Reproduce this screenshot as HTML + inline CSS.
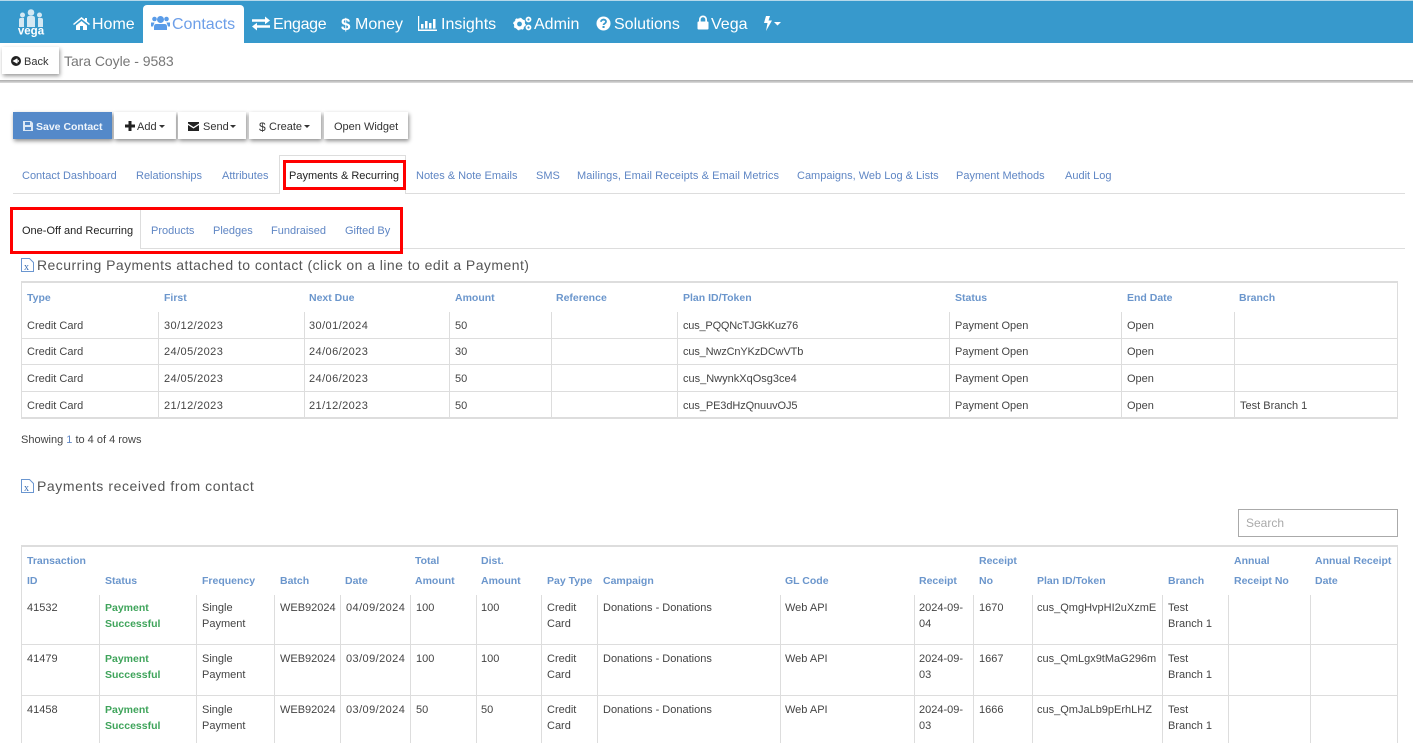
<!DOCTYPE html>
<html><head><meta charset="utf-8"><style>
html,body{margin:0;padding:0;background:#fff}
#p{position:relative;width:1413px;height:743px;overflow:hidden;background:#fff;font-family:"Liberation Sans",sans-serif;font-size:11px;color:#444}
#p span{position:absolute;white-space:nowrap;line-height:14px;height:14px;margin-top:1px}
#p div,#p svg{position:absolute}
#p span.z{margin-top:0}
.n{color:#fff;font-size:16px;top:17px}
.b{color:#333;font-size:11px;top:119px}
.l{color:#5f86c4;top:168px}
.s{color:#5f86c4;top:223px}
#p .h{color:#6b96cc;font-weight:bold;font-size:10.5px}
.g{background:#ddd}
.btn{background:#fff;box-shadow:1px 2px 4px rgba(0,0,0,.45);top:112px;height:27px}
#p .r{color:#3fa45b;font-weight:bold;font-size:10.5px}
.d{letter-spacing:.42px}
</style></head><body><div id="p">
<div style="left:0;top:0;width:1413px;height:43px;background:#3799cc;border-top:1px solid #b5d8ea;box-sizing:border-box"></div>
<div style="left:143px;top:5px;width:101px;height:38px;background:#fff;border-radius:4px 4px 0 0"></div>
<svg style="left:16px;top:8px" width="30" height="30" viewBox="0 0 30 30" fill="#d4e8f3"><circle cx="15" cy="4.500" r="3.300"/><circle cx="6.500" cy="7" r="2.500"/><circle cx="23.500" cy="7" r="2.500"/><path d="M11 10.500q0-2.500 2-2.500h4q2 0 2 2.500V19h-8zM3 12q0-2 1.500-2h3.500v9H3zM22 10h3.500Q27 10 27 12v7h-5z"/><text x="15" y="26.500" text-anchor="middle" font-family="Liberation Sans" font-size="11.500" font-weight="bold" fill="#fff">vega</text></svg>
<svg style="left:73px;top:16px" width="17" height="15" viewBox="0 0 17 15" fill="#fff"><path d="M8.500 1 0 8l1 1 7.500-6 7.500 6 1-1-3-2.500V2h-2v1.800zM3 9.500V14h4v-4h3v4h4V9.500L8.500 5z"/></svg>
<span class="n" style="left:92px">Home</span>
<svg style="left:151px;top:15px" width="19" height="16" viewBox="0 0 19 16" fill="#5a9ce8"><circle cx="9.500" cy="4.500" r="3.500"/><circle cx="3.500" cy="4" r="2.300"/><circle cx="15.500" cy="4" r="2.300"/><path d="M5 9h9q2 0 2 3v3H3v-3q0-3 2-3zM0 7.500h3.500L2 11.500H0zM15.500 7.500H19v4h-2z"/></svg>
<span class="n" style="left:172px;color:#6d9fe8">Contacts</span>
<svg style="left:252px;top:16px" width="18" height="15" viewBox="0 0 18 15" fill="#fff"><path d="M0 3.200h13V.5l5 4L13 8.300V5.800H0zM18 9.200H5V6.700L0 10.500l5 4v-2.700h13z"/></svg>
<span class="n" style="left:273px;letter-spacing:-.3px">Engage</span>
<span class="n" style="left:341px;font-weight:bold;font-size:17px">$</span>
<span class="n" style="left:355px">Money</span>
<svg style="left:418px;top:16px" width="19" height="15" viewBox="0 0 19 15" fill="#fff"><path d="M0 0h1.200v13.500H19V15H0zM3 8h2.500v4.500H3zM7 5h2.500v7.500H7zM11 7h2.500v5.500H11zM15 3h2.500v9.500H15z"/></svg>
<span class="n" style="left:441px">Insights</span>
<svg style="left:513px;top:16px" width="19" height="15" viewBox="0 0 19 15" fill="#fff"><circle cx="6.500" cy="8" r="4" fill="none" stroke="#fff" stroke-width="3.200"/><circle cx="6.500" cy="8" r="5.500" fill="none" stroke="#fff" stroke-width="1.600" stroke-dasharray="2 2.300"/><circle cx="15.500" cy="3.500" r="2" fill="none" stroke="#fff" stroke-width="1.800"/><circle cx="15.500" cy="11.500" r="2" fill="none" stroke="#fff" stroke-width="1.800"/></svg>
<span class="n" style="left:534px">Admin</span>
<svg style="left:596px;top:16px" width="15" height="15" viewBox="0 0 15 15"><circle cx="7.500" cy="7.500" r="7" fill="#fff"/><path d="M5 5.800c.2-3 5-3 5 0 0 1.700-2.400 1.700-2.400 3.200" fill="none" stroke="#3799cc" stroke-width="1.800"/><rect x="6.500" y="10" width="2.100" height="2" fill="#3799cc"/></svg>
<span class="n" style="left:614px">Solutions</span>
<svg style="left:697px;top:15px" width="12" height="15" viewBox="0 0 12 15" fill="#fff"><path d="M2 6.500V4.500a4 4 0 0 1 8 0v2H8.300v-2a2.300 2.300 0 0 0-4.600 0v2z"/><rect x="0.500" y="6.500" width="11" height="8" rx="1"/></svg>
<span class="n" style="left:711px">Vega</span>
<svg style="left:763px;top:16px" width="18" height="15" viewBox="0 0 18 15" fill="#fff"><path d="M3 0h4L5.500 4.500H9L3 15l1.500-8H1zM11 6h7l-3.500 3.500z"/></svg>

<div style="left:0;top:80px;width:1413px;height:3px;background:linear-gradient(#aaa,#ddd)"></div>
<div style="left:2px;top:47px;width:57px;height:27px;background:#fff;box-shadow:1px 2px 4px rgba(0,0,0,.4)"></div>
<svg style="left:11px;top:56px" width="10" height="10" viewBox="0 0 10 10"><circle cx="5" cy="5" r="5" fill="#222"/><path d="M6.500 3 3 5l3.500 2M3.500 5H8" stroke="#fff" stroke-width="1.500" fill="none"/></svg>
<span class="b" style="left:24px;top:54px;color:#333">Back</span>
<span class="z" style="left:64px;top:54px;font-size:14px;color:#777;letter-spacing:-.05px">Tara Coyle - 9583</span>

<div class="btn" style="left:13px;width:99px;background:#5489c9"></div>
<svg style="left:23px;top:121px" width="10" height="10" viewBox="0 0 10 10"><path fill="#dce8f5" d="M0 0h8l2 2v8H0zM2 1v3h5V1zM2 6v3h6V6z"/></svg>
<span class="b" style="left:36px;color:#eef4fb;font-weight:bold;font-size:10.5px">Save Contact</span>
<div class="btn" style="left:114px;width:62px"></div>
<svg style="left:125px;top:121px" width="10" height="10" viewBox="0 0 10 10"><path fill="#222" d="M3.500 0h3v3.500H10v3H6.500V10h-3V6.500H0v-3h3.500z"/></svg>
<span class="b" style="left:137px">Add</span>
<svg style="left:159px;top:125px" width="6" height="3"><path fill="#333" d="M0 0h6L3 3z"/></svg>
<div class="btn" style="left:178px;width:68px"></div>
<svg style="left:188px;top:122px" width="11" height="9" viewBox="0 0 11 9"><path fill="#222" d="M0 0h11v1.500L5.500 5 0 1.500zM0 3l5.500 3.500L11 3v6H0z"/></svg>
<span class="b" style="left:203px">Send</span>
<svg style="left:230px;top:125px" width="6" height="3"><path fill="#333" d="M0 0h6L3 3z"/></svg>
<div class="btn" style="left:249px;width:72px"></div>
<span class="b" style="left:259px;font-size:12px">$</span>
<span class="b" style="left:269px">Create</span>
<svg style="left:304px;top:125px" width="6" height="3"><path fill="#333" d="M0 0h6L3 3z"/></svg>
<div class="btn" style="left:324px;width:84px"></div>
<span class="b" style="left:334px">Open Widget</span>

<div class="g" style="left:13px;top:193px;width:1392px;height:1px"></div>
<div style="left:279px;top:155px;width:127px;height:39px;background:#fff;border:1px solid #ddd;border-bottom:0;box-sizing:border-box"></div>
<span class="l" style="left:22px">Contact Dashboard</span>
<span class="l" style="left:136px">Relationships</span>
<span class="l" style="left:222px">Attributes</span>
<span style="left:289px;top:168px;color:#222">Payments &amp; Recurring</span>
<span class="l" style="left:416px">Notes &amp; Note Emails</span>
<span class="l" style="left:536px">SMS</span>
<span class="l" style="left:577px;letter-spacing:.07px">Mailings, Email Receipts &amp; Email Metrics</span>
<span class="l" style="left:797px">Campaigns, Web Log &amp; Lists</span>
<span class="l" style="left:956px">Payment Methods</span>
<span class="l" style="left:1065px">Audit Log</span>
<div style="left:283px;top:160px;width:123px;height:30px;border:3px solid #f00;box-sizing:border-box"></div>

<div class="g" style="left:140px;top:248px;width:1265px;height:1px"></div>
<div class="g" style="left:140px;top:210px;width:1px;height:39px"></div>
<span style="left:22px;top:223px;color:#222">One-Off and Recurring</span>
<span class="s" style="left:151px">Products</span>
<span class="s" style="left:213px">Pledges</span>
<span class="s" style="left:271px">Fundraised</span>
<span class="s" style="left:345px">Gifted By</span>
<div style="left:10px;top:207px;width:393px;height:47px;border:3px solid #f00;box-sizing:border-box"></div>

<svg style="left:21px;top:258px" width="13" height="14" viewBox="0 0 13 14"><path d="M.5.500h8l4 4v9H.500z" fill="#fff" stroke="#6a96d0"/><text x="3" y="12" font-size="10" font-family="Liberation Serif" fill="#3a6fb5">x</text></svg>
<span class="z" style="left:37px;top:258px;font-size:14px;color:#555;letter-spacing:.45px">Recurring Payments attached to contact (click on a line to edit a Payment)</span>

<div class="g" style="left:21px;top:281px;width:1377px;height:2px"></div>
<div class="g" style="left:21px;top:281px;width:1px;height:138px"></div>
<div class="g" style="left:1397px;top:281px;width:1px;height:138px"></div>
<div class="g" style="left:21px;top:338px;width:1377px;height:1px"></div>
<div class="g" style="left:21px;top:364px;width:1377px;height:1px"></div>
<div class="g" style="left:21px;top:391px;width:1377px;height:1px"></div>
<div class="g" style="left:21px;top:417px;width:1377px;height:2px"></div>
<div class="g" style="left:158px;top:312px;width:1px;height:106px"></div>
<div class="g" style="left:304px;top:312px;width:1px;height:106px"></div>
<div class="g" style="left:449px;top:312px;width:1px;height:106px"></div>
<div class="g" style="left:551px;top:312px;width:1px;height:106px"></div>
<div class="g" style="left:677px;top:312px;width:1px;height:106px"></div>
<div class="g" style="left:949px;top:312px;width:1px;height:106px"></div>
<div class="g" style="left:1121px;top:312px;width:1px;height:106px"></div>
<div class="g" style="left:1234px;top:312px;width:1px;height:106px"></div>

<span class="h" style="left:27px;top:290px">Type</span>
<span class="h" style="left:164px;top:290px">First</span>
<span class="h" style="left:309px;top:290px">Next Due</span>
<span class="h" style="left:455px;top:290px">Amount</span>
<span class="h" style="left:556px;top:290px">Reference</span>
<span class="h" style="left:683px;top:290px">Plan ID/Token</span>
<span class="h" style="left:955px;top:290px">Status</span>
<span class="h" style="left:1127px;top:290px">End Date</span>
<span class="h" style="left:1239px;top:290px">Branch</span>

<span style="left:27px;top:318px">Credit Card</span><span class="d" style="left:164px;top:318px">30/12/2023</span><span class="d" style="left:309px;top:318px">30/01/2024</span><span style="left:455px;top:318px">50</span><span style="left:683px;top:318px;letter-spacing:-.2px">cus_PQQNcTJGkKuz76</span><span style="left:955px;top:318px">Payment Open</span><span style="left:1127px;top:318px">Open</span>
<span style="left:27px;top:344px">Credit Card</span><span class="d" style="left:164px;top:344px">24/05/2023</span><span class="d" style="left:309px;top:344px">24/06/2023</span><span style="left:455px;top:344px">30</span><span style="left:683px;top:344px;letter-spacing:-.15px">cus_NwzCnYKzDCwVTb</span><span style="left:955px;top:344px">Payment Open</span><span style="left:1127px;top:344px">Open</span>
<span style="left:27px;top:371px">Credit Card</span><span class="d" style="left:164px;top:371px">24/05/2023</span><span class="d" style="left:309px;top:371px">24/06/2023</span><span style="left:455px;top:371px">50</span><span style="left:683px;top:371px">cus_NwynkXqOsg3ce4</span><span style="left:955px;top:371px">Payment Open</span><span style="left:1127px;top:371px">Open</span>
<span style="left:27px;top:398px">Credit Card</span><span class="d" style="left:164px;top:398px">21/12/2023</span><span class="d" style="left:309px;top:398px">21/12/2023</span><span style="left:455px;top:398px">50</span><span style="left:683px;top:398px;letter-spacing:-.1px">cus_PE3dHzQnuuvOJ5</span><span style="left:955px;top:398px">Payment Open</span><span style="left:1127px;top:398px">Open</span><span style="left:1240px;top:398px">Test Branch 1</span>

<span style="left:21px;top:432px">Showing <b style="font-weight:normal;color:#5f86c4">1</b> to 4 of 4 rows</span>

<svg style="left:21px;top:479px" width="13" height="14" viewBox="0 0 13 14"><path d="M.5.500h8l4 4v9H.500z" fill="#fff" stroke="#6a96d0"/><text x="3" y="12" font-size="10" font-family="Liberation Serif" fill="#3a6fb5">x</text></svg>
<span class="z" style="left:37px;top:479px;font-size:14px;color:#555;letter-spacing:.58px">Payments received from contact</span>

<div style="left:1238px;top:509px;width:160px;height:28px;border:1px solid #aaa;box-sizing:border-box"></div>
<span class="z" style="left:1246px;top:516px;font-size:12px;color:#aaa">Search</span>

<div class="g" style="left:21px;top:545px;width:1377px;height:2px"></div>
<div class="g" style="left:21px;top:545px;width:1px;height:198px"></div>
<div class="g" style="left:1397px;top:545px;width:1px;height:198px"></div>
<div class="g" style="left:21px;top:644px;width:1377px;height:1px"></div>
<div class="g" style="left:21px;top:695px;width:1377px;height:1px"></div>
<div class="g" style="left:99px;top:595px;width:1px;height:148px"></div>
<div class="g" style="left:196px;top:595px;width:1px;height:148px"></div>
<div class="g" style="left:274px;top:595px;width:1px;height:148px"></div>
<div class="g" style="left:340px;top:595px;width:1px;height:148px"></div>
<div class="g" style="left:410px;top:595px;width:1px;height:148px"></div>
<div class="g" style="left:476px;top:595px;width:1px;height:148px"></div>
<div class="g" style="left:541px;top:595px;width:1px;height:148px"></div>
<div class="g" style="left:597px;top:595px;width:1px;height:148px"></div>
<div class="g" style="left:780px;top:595px;width:1px;height:148px"></div>
<div class="g" style="left:914px;top:595px;width:1px;height:148px"></div>
<div class="g" style="left:973px;top:595px;width:1px;height:148px"></div>
<div class="g" style="left:1032px;top:595px;width:1px;height:148px"></div>
<div class="g" style="left:1162px;top:595px;width:1px;height:148px"></div>
<div class="g" style="left:1228px;top:595px;width:1px;height:148px"></div>
<div class="g" style="left:1310px;top:595px;width:1px;height:148px"></div>

<span class="h" style="left:27px;top:553px">Transaction</span>
<span class="h" style="left:415px;top:553px">Total</span>
<span class="h" style="left:481px;top:553px">Dist.</span>
<span class="h" style="left:979px;top:553px">Receipt</span>
<span class="h" style="left:1234px;top:553px">Annual</span>
<span class="h" style="left:1315px;top:553px">Annual Receipt</span>
<span class="h" style="left:27px;top:573px">ID</span>
<span class="h" style="left:105px;top:573px">Status</span>
<span class="h" style="left:202px;top:573px">Frequency</span>
<span class="h" style="left:280px;top:573px">Batch</span>
<span class="h" style="left:345px;top:573px">Date</span>
<span class="h" style="left:415px;top:573px">Amount</span>
<span class="h" style="left:481px;top:573px">Amount</span>
<span class="h" style="left:547px;top:573px">Pay Type</span>
<span class="h" style="left:603px;top:573px">Campaign</span>
<span class="h" style="left:785px;top:573px">GL Code</span>
<span class="h" style="left:919px;top:573px">Receipt</span>
<span class="h" style="left:979px;top:573px">No</span>
<span class="h" style="left:1037px;top:573px">Plan ID/Token</span>
<span class="h" style="left:1168px;top:573px">Branch</span>
<span class="h" style="left:1234px;top:573px">Receipt No</span>
<span class="h" style="left:1315px;top:573px">Date</span>

<span style="left:27px;top:600px">41532</span><span class="r" style="left:105px;top:600px">Payment</span><span class="r" style="left:105px;top:616px">Successful</span><span style="left:202px;top:600px">Single</span><span style="left:202px;top:616px">Payment</span><span style="left:280px;top:600px">WEB92024</span><span class="d" style="left:346px;top:600px">04/09/2024</span><span style="left:416px;top:600px">100</span><span style="left:481px;top:600px">100</span><span style="left:547px;top:600px">Credit</span><span style="left:547px;top:616px">Card</span><span style="left:603px;top:600px">Donations - Donations</span><span style="left:785px;top:600px">Web API</span><span style="left:919px;top:600px">2024-09-</span><span style="left:919px;top:616px">04</span><span style="left:979px;top:600px">1670</span><span style="left:1037px;top:600px">cus_QmgHvpHI2uXzmE</span><span style="left:1168px;top:600px">Test</span><span style="left:1168px;top:616px">Branch 1</span>
<span style="left:27px;top:651px">41479</span><span class="r" style="left:105px;top:651px">Payment</span><span class="r" style="left:105px;top:667px">Successful</span><span style="left:202px;top:651px">Single</span><span style="left:202px;top:667px">Payment</span><span style="left:280px;top:651px">WEB92024</span><span class="d" style="left:346px;top:651px">03/09/2024</span><span style="left:416px;top:651px">100</span><span style="left:481px;top:651px">100</span><span style="left:547px;top:651px">Credit</span><span style="left:547px;top:667px">Card</span><span style="left:603px;top:651px">Donations - Donations</span><span style="left:785px;top:651px">Web API</span><span style="left:919px;top:651px">2024-09-</span><span style="left:919px;top:667px">03</span><span style="left:979px;top:651px">1667</span><span style="left:1037px;top:651px">cus_QmLgx9tMaG296m</span><span style="left:1168px;top:651px">Test</span><span style="left:1168px;top:667px">Branch 1</span>
<span style="left:27px;top:702px">41458</span><span class="r" style="left:105px;top:702px">Payment</span><span class="r" style="left:105px;top:718px">Successful</span><span style="left:202px;top:702px">Single</span><span style="left:202px;top:718px">Payment</span><span style="left:280px;top:702px">WEB92024</span><span class="d" style="left:346px;top:702px">03/09/2024</span><span style="left:416px;top:702px">50</span><span style="left:481px;top:702px">50</span><span style="left:547px;top:702px">Credit</span><span style="left:547px;top:718px">Card</span><span style="left:603px;top:702px">Donations - Donations</span><span style="left:785px;top:702px">Web API</span><span style="left:919px;top:702px">2024-09-</span><span style="left:919px;top:718px">03</span><span style="left:979px;top:702px">1666</span><span style="left:1037px;top:702px">cus_QmJaLb9pErhLHZ</span><span style="left:1168px;top:702px">Test</span><span style="left:1168px;top:718px">Branch 1</span>
</div></body></html>
